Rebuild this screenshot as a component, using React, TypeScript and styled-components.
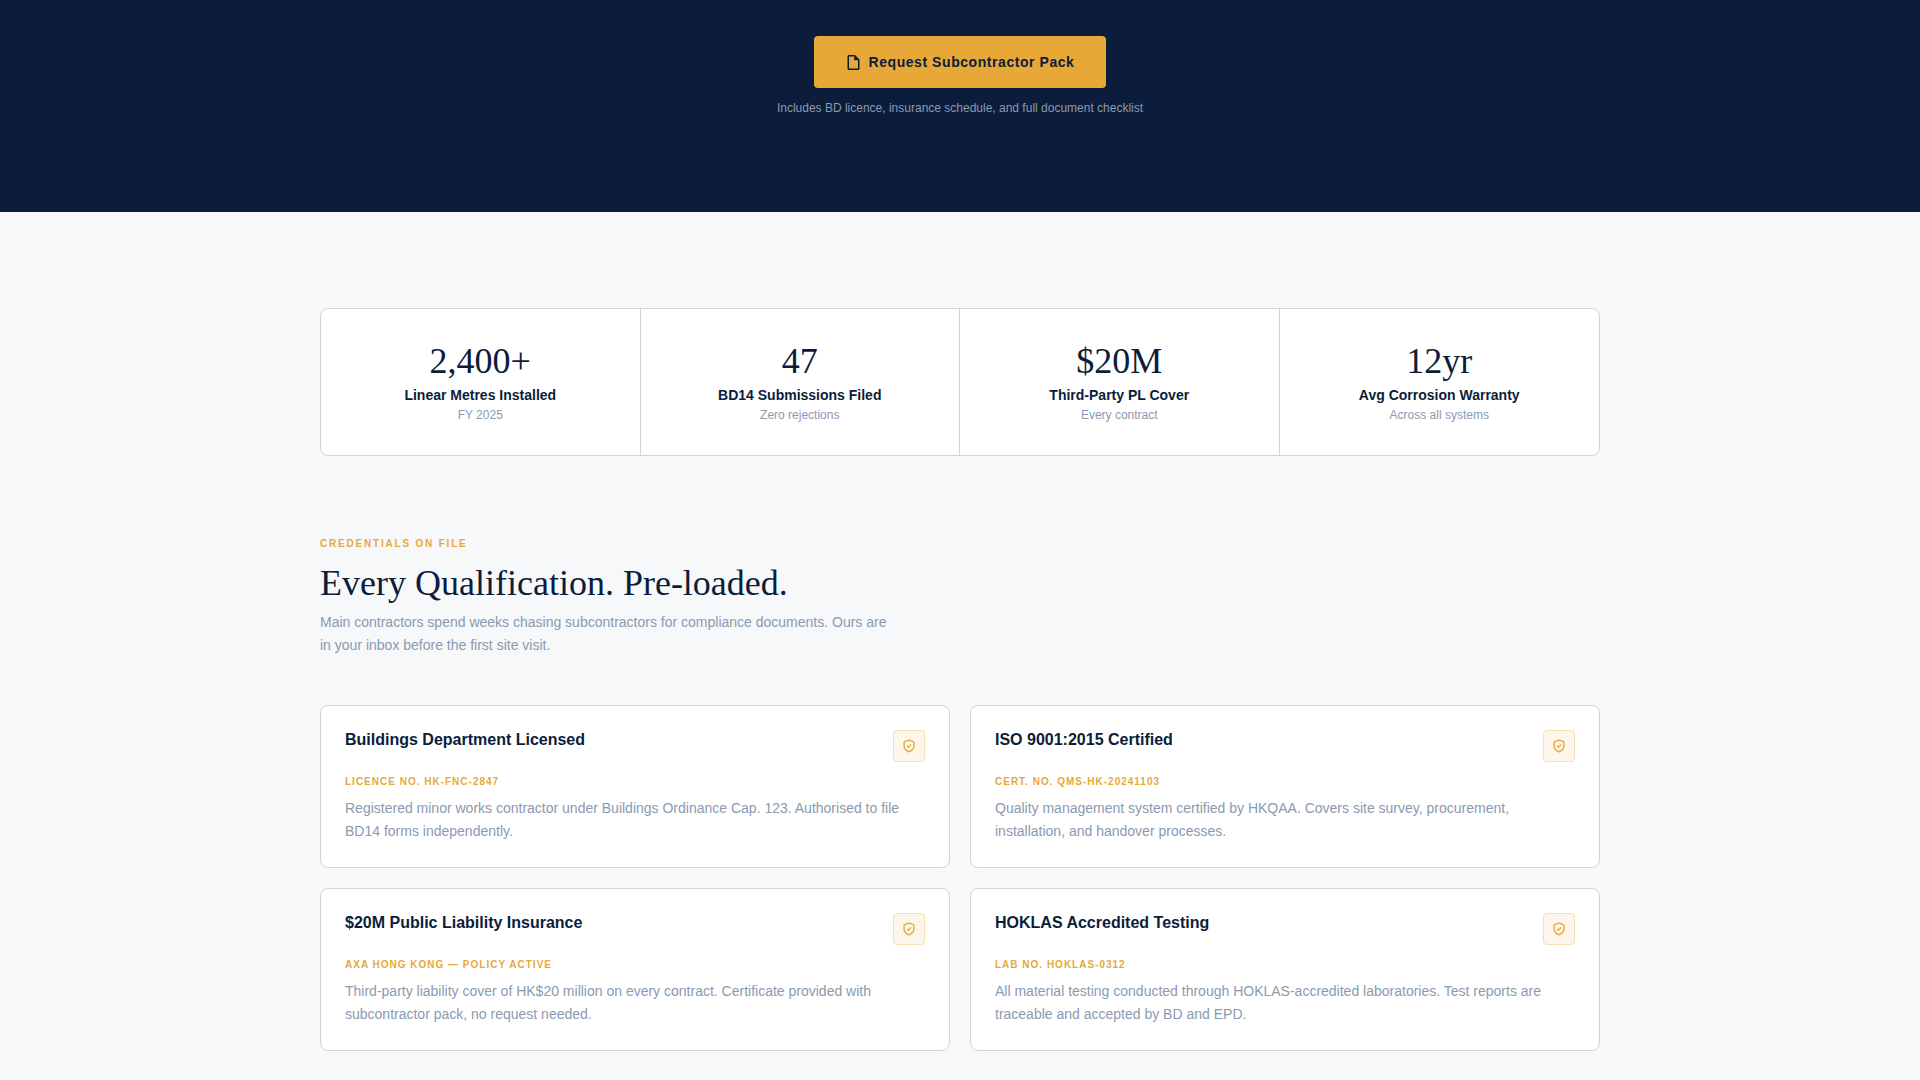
import React from "react";
import styled, { createGlobalStyle } from "styled-components";

const color = {
  navy: "#0b1d3a",
  gold: "#e8a838",
  slate: "#8a9ab0",
  line: "#d1d5db",
  page: "#f7f8fa",
};

const GlobalStyle = createGlobalStyle`
  *, *::before, *::after { box-sizing: border-box; }
  body {
    margin: 0;
    background: ${color.page};
    color: ${color.navy};
    font-family: "Liberation Sans", Arial, sans-serif;
  }
  h2, h3, p, dl, dt, dd { margin: 0; padding: 0; }
`;

const Hero = styled.header`
  display: flex;
  flex-direction: column;
  align-items: center;
  gap: 12px;
  padding: 36px 24px 96px;
  background: ${color.navy};
`;

const PackButton = styled.button`
  display: inline-flex;
  align-items: center;
  gap: 8px;
  padding: 17px 32px;
  border: 0;
  border-radius: 4px;
  background: ${color.gold};
  color: ${color.navy};
  font: 700 14px/18px "Liberation Sans", Arial, sans-serif;
  letter-spacing: 0.04em;
  cursor: pointer;
`;

const HeroNote = styled.p`
  color: ${color.slate};
  font-size: 12px;
  line-height: 16px;
  text-align: center;
`;

const Main = styled.main`
  max-width: 1328px;
  margin: 0 auto;
  padding: 96px 24px 80px;
`;

const Stats = styled.dl`
  display: grid;
  grid-template-columns: repeat(4, 1fr);
  overflow: hidden;
  border: 1px solid ${color.line};
  border-radius: 8px;
  background: #fff;
`;

const Stat = styled.div`
  display: flex;
  flex-direction: column;
  align-items: center;
  padding: 32px 24px;

  &:not(:last-child) {
    border-right: 1px solid ${color.line};
  }
`;

const StatValue = styled.dd`
  order: -1;
  margin-bottom: 4px;
  font: 400 36px/40px "Liberation Serif", "Times New Roman", serif;
`;

const StatLabel = styled.dt`
  margin-bottom: 2px;
  font-size: 14px;
  font-weight: 700;
  line-height: 20px;
`;

const StatNote = styled.dd`
  color: ${color.slate};
  font-size: 12px;
  line-height: 16px;
`;

const Intro = styled.div`
  max-width: 576px;
  margin: 80px 0 48px;
`;

const Eyebrow = styled.p`
  color: ${color.gold};
  font-size: 10px;
  font-weight: 700;
  line-height: 15px;
  letter-spacing: 0.18em;
  text-transform: uppercase;
`;

const Title = styled.h2`
  margin: 12px 0 8px;
  font: 400 36px/40px "Liberation Serif", "Times New Roman", serif;
`;

const Copy = styled.p`
  color: ${color.slate};
  font-size: 14px;
  line-height: 23px;
`;

const Cards = styled.div`
  display: grid;
  grid-template-columns: repeat(2, 1fr);
  gap: 20px;
`;

const Card = styled.article`
  padding: 24px;
  border: 1px solid ${color.line};
  border-radius: 8px;
  background: #fff;
`;

const CardHead = styled.div`
  display: flex;
  align-items: flex-start;
  justify-content: space-between;
  margin-bottom: 12px;
`;

const CardTitle = styled.h3`
  font-size: 16px;
  font-weight: 700;
  line-height: 20px;
`;

const Badge = styled.span`
  display: flex;
  align-items: center;
  justify-content: center;
  width: 32px;
  height: 32px;
  border: 1px solid #f6dfb4;
  border-radius: 4px;
  background: #fdf6eb;
  color: ${color.gold};
`;

const Reference = styled.p`
  margin-bottom: 8px;
  color: ${color.gold};
  font-size: 10px;
  font-weight: 700;
  line-height: 15px;
  letter-spacing: 0.1em;
  text-transform: uppercase;
`;

const FileIcon = () => (
  <svg width="15" height="15" viewBox="2 2 20 20" fill="currentColor" aria-hidden="true">
    <path d="M14 2H6c-1.100 0-1.990.9-1.990 2L4 20c0 1.100.89 2 1.990 2H18c1.100 0 2-.9 2-2V8l-6-6zM6 20V4h7v5h5v11H6z" />
  </svg>
);

const ShieldIcon = () => (
  <svg width="14" height="14" viewBox="0 0 14 14" fill="none" stroke="currentColor" strokeLinecap="round" strokeLinejoin="round" aria-hidden="true">
    <path strokeWidth="1.4" d="M7 1.200 11.300 2.600c.4.130.6.450.6.850V7c0 2.700-1.900 4.500-4.900 5.800C4 11.500 2.100 9.700 2.100 7V3.450c0-.4.2-.720.6-.850L7 1.200z" />
    <path strokeWidth="1.200" d="M5.300 7.200 6.500 8.300 8.700 5.600" />
  </svg>
);

const stats = [
  { value: "2,400+", label: "Linear Metres Installed", note: "FY 2025" },
  { value: "47", label: "BD14 Submissions Filed", note: "Zero rejections" },
  { value: "$20M", label: "Third-Party PL Cover", note: "Every contract" },
  { value: "12yr", label: "Avg Corrosion Warranty", note: "Across all systems" },
];

const credentials = [
  {
    title: "Buildings Department Licensed",
    reference: "Licence No. HK-FNC-2847",
    text: "Registered minor works contractor under Buildings Ordinance Cap. 123. Authorised to file BD14 forms independently.",
  },
  {
    title: "ISO 9001:2015 Certified",
    reference: "Cert. No. QMS-HK-20241103",
    text: "Quality management system certified by HKQAA. Covers site survey, procurement, installation, and handover processes.",
  },
  {
    title: "$20M Public Liability Insurance",
    reference: "AXA Hong Kong — Policy Active",
    text: "Third-party liability cover of HK$20 million on every contract. Certificate provided with subcontractor pack, no request needed.",
  },
  {
    title: "HOKLAS Accredited Testing",
    reference: "Lab No. HOKLAS-0312",
    text: "All material testing conducted through HOKLAS-accredited laboratories. Test reports are traceable and accepted by BD and EPD.",
  },
];

export default function App() {
  return (
    <>
      <GlobalStyle />
      <Hero>
        <PackButton type="button">
          <FileIcon />
          Request Subcontractor Pack
        </PackButton>
        <HeroNote>Includes BD licence, insurance schedule, and full document checklist</HeroNote>
      </Hero>
      <Main>
        <Stats>
          {stats.map((s) => (
            <Stat key={s.label}>
              <StatLabel>{s.label}</StatLabel>
              <StatValue>{s.value}</StatValue>
              <StatNote>{s.note}</StatNote>
            </Stat>
          ))}
        </Stats>
        <section>
          <Intro>
            <Eyebrow>Credentials on file</Eyebrow>
            <Title>Every Qualification. Pre-loaded.</Title>
            <Copy>
              Main contractors spend weeks chasing subcontractors for compliance documents. Ours are in your inbox before the first site visit.
            </Copy>
          </Intro>
          <Cards>
            {credentials.map((c) => (
              <Card key={c.title}>
                <CardHead>
                  <CardTitle>{c.title}</CardTitle>
                  <Badge>
                    <ShieldIcon />
                  </Badge>
                </CardHead>
                <Reference>{c.reference}</Reference>
                <Copy>{c.text}</Copy>
              </Card>
            ))}
          </Cards>
        </section>
      </Main>
    </>
  );
}
